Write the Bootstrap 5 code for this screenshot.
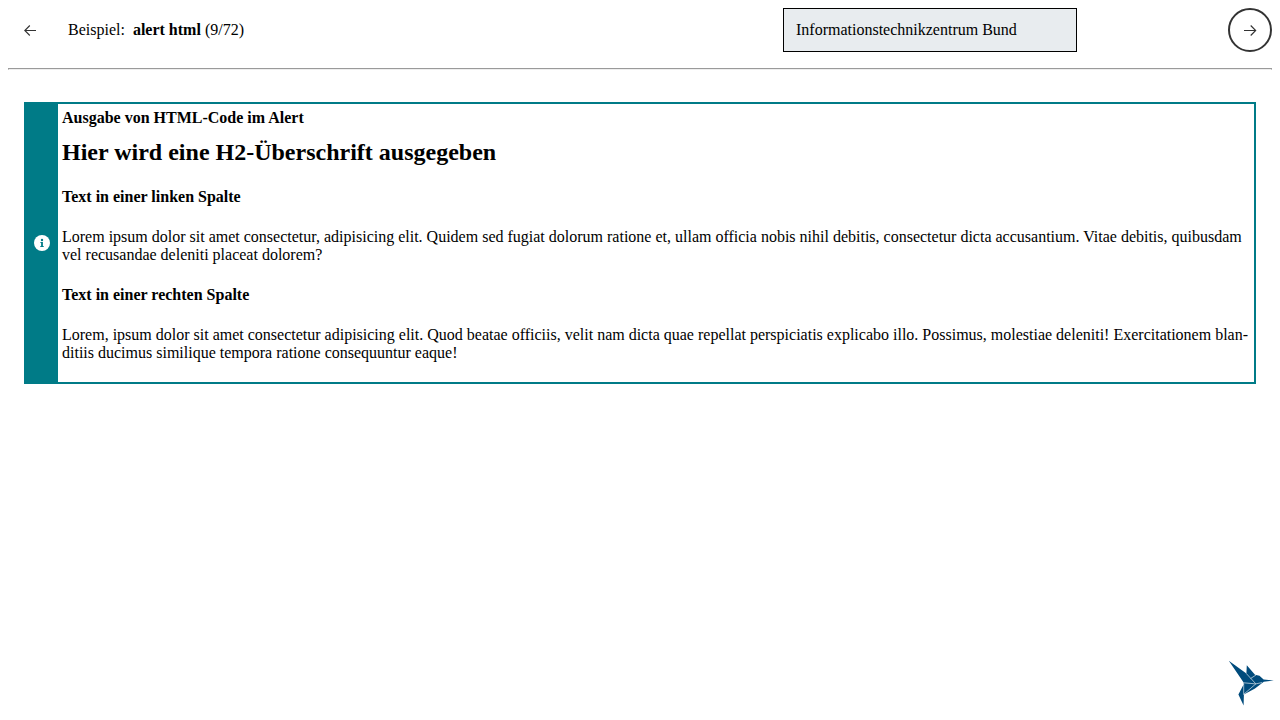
<!DOCTYPE html>
<html lang="de">
<head>
<meta charset="utf-8">
<meta name="viewport" content="width=device-width, initial-scale=1">
<title>Beispiel: alert html</title>
<link href="https://cdn.jsdelivr.net/npm/bootstrap@5.3.0/dist/css/bootstrap.min.css" rel="stylesheet">
<style>
  body { font-family: "Liberation Serif", "Times New Roman", serif; font-size: 16px; line-height: 18px; color: #000; background: #fff; }
  .round-btn { width: 44px; height: 44px; color: #333; background: transparent; border: 2px solid transparent; }
  .round-btn.is-active { border-color: #333; }
  .org-select { width: 294px; height: 44px; margin-right: 151px; padding: 0 12px; font: inherit; color: #000; background: #e8ecef; border: 1px solid #000; border-radius: 0; appearance: none; }
  .divider { height: 2px; border: 1px solid #9a9a9a; border-bottom-color: #eee; opacity: 1; color: inherit; }
  .info-alert { border: 2px solid #007b87; }
  .info-icon { width: 32px; background: #007b87; color: #fff; }
  .info-body { padding: 5px 4px 20px; }
  .info-body h2 { font-size: 24px; line-height: 28px; font-weight: 700; margin: 11px 0 22px; }
  .info-body h3 { font-size: 16px; line-height: 18px; font-weight: 700; margin: 0 0 22px; }
  .info-body p { margin: 0; }
  .info-body p + h3 { margin-top: 22px; }
  .brand-bird { right: 6px; bottom: 14px; }
</style>
</head>
<body>
<header class="px-2 pt-2">
  <nav class="d-flex align-items-center" aria-label="Beispiele">
    <button type="button" class="round-btn rounded-circle p-0 d-flex align-items-center justify-content-center" aria-label="Zurück">
      <svg width="16" height="16" viewBox="0 0 16 16" fill="none" stroke="currentColor" stroke-width="1.1" aria-hidden="true"><path d="M14 8.5H2.8M7.8 3.5l-5 5 5 5"/></svg>
    </button>
    <div class="ms-3 me-auto">Beispiel:&nbsp; <strong>alert html</strong> (9/72)</div>
    <select class="org-select" aria-label="Mandant">
      <option>Informationstechnikzentrum Bund</option>
    </select>
    <button type="button" class="round-btn is-active rounded-circle p-0 d-flex align-items-center justify-content-center" aria-label="Weiter">
      <svg width="16" height="16" viewBox="0 0 16 16" fill="none" stroke="currentColor" stroke-width="1.1" aria-hidden="true"><path d="M2 8.5h11.7M8.7 3.5l5 5-5 5"/></svg>
    </button>
  </nav>
  <hr class="divider mt-3 mb-0">
</header>
<main class="px-4 pt-3">
  <section class="info-alert d-flex mt-3" role="alert">
    <div class="info-icon d-flex flex-shrink-0 align-items-center justify-content-center">
      <svg width="16" height="16" viewBox="0 0 16 16" role="img" aria-label="Information"><circle cx="8" cy="8" r="8" fill="currentColor"/><circle cx="8" cy="5" r="1.2" fill="#007b87"/><path d="M6.4 7h2.5v3.9h.8V12H6.3v-1.1h.8V8.1h-.7z" fill="#007b87"/></svg>
    </div>
    <div class="info-body flex-grow-1">
      <strong class="d-block">Ausgabe von HTML-Code im Alert</strong>
      <h2>Hier wird eine H2-Überschrift ausgegeben</h2>
      <h3>Text in einer linken Spalte</h3>
      <p>Lorem ipsum dolor sit amet consectetur, adipisicing elit. Quidem sed fugiat dolorum ratione et, ullam officia nobis nihil debitis, consectetur dicta accusantium. Vitae debitis, quibusdam vel recusandae deleniti placeat dolorem?</p>
      <h3>Text in einer rechten Spalte</h3>
      <p>Lorem, ipsum dolor sit amet consectetur adipisicing elit. Quod beatae officiis, velit nam dicta quae repellat perspiciatis explicabo illo. Possimus, molestiae deleniti! Exercitationem blan&shy;ditiis ducimus similique tempora ratione consequuntur eaque!</p>
    </div>
  </section>
</main>
<a class="brand-bird position-fixed d-block" href="#" aria-label="Startseite">
  <svg class="d-block" width="46" height="46" viewBox="0 0 46 46" aria-hidden="true">
    <path fill="#004b7c" d="M.8.8L18.4 13.6L18.8 5.2L27 14.8L31.5 15.8L35.6 19.5L45.8 20.6L35.8 21.7L27 28.4L15.9 34.6L15.6 45.4L10.4 34.4L15.6 24.4V22.6Z"/>
    <path fill="none" stroke="#fff" stroke-width=".6" d="M18.2 13.4L27.6 23.6M22.6 18.5L28 15M15.6 22.8L27.8 23.9L34 22.6M27.8 23.9L15.6 34.4M15.7 23.5V34.5"/>
  </svg>
</a>
<script src="https://cdn.jsdelivr.net/npm/bootstrap@5.3.0/dist/js/bootstrap.bundle.min.js"></script>
</body>
</html>
